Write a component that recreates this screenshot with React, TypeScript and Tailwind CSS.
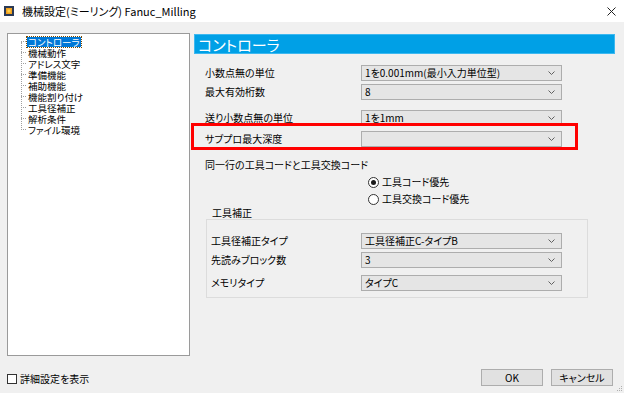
import type { ReactNode } from 'react';

const treeItems = [
  'コントローラ',
  '機械動作',
  'アドレス文字',
  '準備機能',
  '補助機能',
  '機能割り付け',
  '工具径補正',
  '解析条件',
  'ファイル環境',
];

function Chevron() {
  return (
    <svg width="7" height="4" viewBox="0 0 7 4" className="shrink-0">
      <path d="M0.5 0.5 L3.5 3.5 L6.5 0.5" fill="none" stroke="#606060" strokeWidth="1" />
    </svg>
  );
}

function Combo({ value }: { value?: string }) {
  return (
    <div className="flex h-[16px] w-[201px] shrink-0 items-center justify-between border border-[#adadad] bg-[#e5e5e5] pl-[3px] pr-[6px] text-[10px] leading-none text-black">
      <span>{value}</span>
      <Chevron />
    </div>
  );
}

function Row({ label, value, labelWidth = 'w-[156px]', className = '' }: { label: string; value?: string; labelWidth?: string; className?: string }) {
  return (
    <div className={`flex items-center ${className}`}>
      <span className={`${labelWidth} shrink-0 text-[10px] leading-none`}>{label}</span>
      <Combo value={value} />
    </div>
  );
}

function Radio({ checked, children, className = '' }: { checked?: boolean; children: ReactNode; className?: string }) {
  return (
    <div className={`flex h-[14px] items-center pl-[163px] ${className}`}>
      <span className="flex h-[11px] w-[11px] items-center justify-center rounded-full border border-[#333333] bg-white">
        {checked && <span className="h-[5px] w-[5px] rounded-full bg-[#1a1a1a]" />}
      </span>
      <span className="ml-[3px] text-[10px] leading-none">{children}</span>
    </div>
  );
}

export default function App() {
  return (
    <div className="relative flex h-[393px] w-[624px] flex-col overflow-hidden bg-[#f0f0f0] text-black [font-family:'Noto_Sans_CJK_JP','Noto_Sans',sans-serif] [font-feature-settings:'palt']">
      {/* title bar */}
      <div className="flex h-[22px] shrink-0 items-center justify-between bg-white pl-[4px] pr-[8px]">
        <div className="flex items-center">
          <svg width="10" height="10" viewBox="0 0 10 10">
            <rect x="0" y="0" width="10" height="10" fill="#2b3a55" />
            <rect x="2" y="2" width="6" height="6" fill="#f0a020" />
            <rect x="3.5" y="3.5" width="3" height="3" fill="#ffd24a" />
          </svg>
          <span className="ml-[8px] text-[11px] leading-none">機械設定(ミーリング) Fanuc_Milling</span>
        </div>
        <svg width="9" height="9" viewBox="0 0 9 9">
          <path d="M0.5 0.5 L8.5 8.5 M8.5 0.5 L0.5 8.5" stroke="#222" strokeWidth="1" />
        </svg>
      </div>

      {/* main */}
      <div className="flex h-[334px] shrink-0 gap-[4px] pl-[7px] pt-[11px]">
        {/* tree */}
        <div className="relative h-[323px] w-[183px] shrink-0 border border-[#9a9a9a] bg-white pt-[2px]">
          <span className="absolute left-[13px] top-[8px] h-[88px] border-l border-dotted border-[#a0a0a0]" />
          <ul className="pl-[13px]">
            {treeItems.map((item, i) => (
              <li key={item} className="flex h-[11px] items-center">
                <span className="w-[5px] border-t border-dotted border-[#a0a0a0]" />
                <span
                  className={`ml-[1px] px-[1px] text-[9.5px] leading-[10px] ${
                    i === 0 ? 'bg-[#0078d7] text-white outline-1 outline-dotted outline-[#7a4a00]' : ''
                  }`}
                >
                  {item}
                </span>
              </li>
            ))}
          </ul>
        </div>

        {/* right panel */}
        <div className="w-[421px] shrink-0 pt-[1px]">
          <div className="flex h-[20px] items-center border border-[#3cb8f0] bg-[#00a0e6] pl-[3px] text-[15px] leading-none text-white">
            コントローラ
          </div>
          <div className="pl-[11px]">
            <Row className="mt-[11px]" label="小数点無の単位" value="1を0.001mm(最小入力単位型)" />
            <Row className="mt-[3px]" label="最大有効桁数" value="8" />
            <Row className="mt-[10px]" label="送り小数点無の単位" value="1を1mm" />
            <Row className="mt-[5px]" label="サブプロ最大深度" />
            <div className="mt-[12px] h-[12px] text-[10px] leading-[12px]">同一行の工具コードと工具交換コード</div>
            <Radio checked className="mt-[4px]">工具コード優先</Radio>
            <Radio className="mt-[3px]">工具交換コード優先</Radio>
            <div className="mt-[1px] h-[12px] pl-[7px] text-[10px] leading-[12px]">工具補正</div>
          </div>
          <div className="ml-[12px] w-[382px] border border-[#dcdcdc] pb-[6px] pl-[4px] pt-[13px]">
            <Row labelWidth="w-[150px]" label="工具径補正タイプ" value="工具径補正C-タイプB" />
            <Row labelWidth="w-[150px]" className="mt-[3px]" label="先読みブロック数" value="3" />
            <Row labelWidth="w-[150px]" className="mt-[7px]" label="メモリタイプ" value="タイプC" />
          </div>
        </div>
      </div>

      {/* bottom bar */}
      <div className="mt-[13px] flex h-[17px] items-center justify-between pl-[7px] pr-[11px]">
        <div className="mt-[3px] flex items-center">
          <span className="h-[10px] w-[10px] border border-[#333333] bg-white" />
          <span className="ml-[3px] text-[10px] leading-none">詳細設定を表示</span>
        </div>
        <div className="flex gap-[8px]">
          <button className="flex h-[17px] w-[62px] items-center justify-center border border-[#adadad] bg-[#e1e1e1] text-[10px] leading-none">
            OK
          </button>
          <button className="flex h-[17px] w-[62px] items-center justify-center border border-[#adadad] bg-[#e1e1e1] text-[10px] leading-none">
            キャンセル
          </button>
        </div>
      </div>

      {/* size grip */}
      <svg className="absolute bottom-[1px] right-[1px]" width="6" height="6" viewBox="0 0 6 6">
        <rect x="4" y="0" width="1" height="1" fill="#b0b0b0" />
        <rect x="2" y="2" width="1" height="1" fill="#b0b0b0" />
        <rect x="4" y="2" width="1" height="1" fill="#b0b0b0" />
        <rect x="0" y="4" width="1" height="1" fill="#b0b0b0" />
        <rect x="2" y="4" width="1" height="1" fill="#b0b0b0" />
        <rect x="4" y="4" width="1" height="1" fill="#b0b0b0" />
      </svg>

      {/* annotation */}
      <div className="pointer-events-none absolute left-[191px] top-[123px] h-[27px] w-[387px] border-[3px] border-[#ff0000]" />
    </div>
  );
}
